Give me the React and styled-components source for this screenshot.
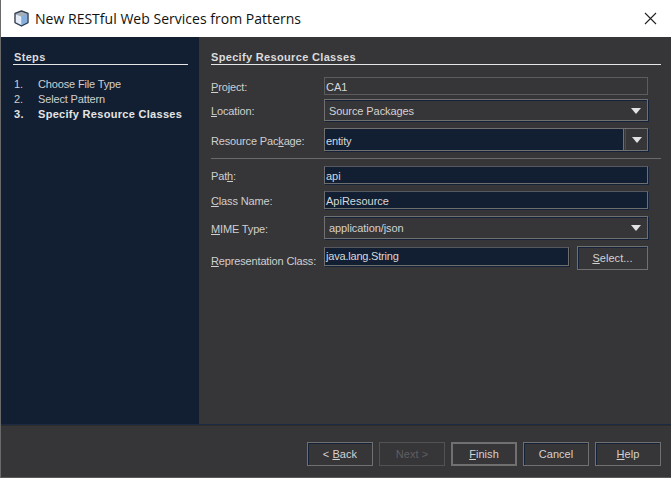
import React from 'react';
import styled, { createGlobalStyle } from 'styled-components';

const GlobalStyle = createGlobalStyle`
  html, body {
    margin: 0;
    padding: 0;
    background: #363538;
  }
`;

const Dialog = styled.div`
  width: 671px;
  height: 478px;
  box-sizing: border-box;
  display: flex;
  flex-direction: column;
  border-left: 1px solid #6a6a6a;
  border-bottom: 1px solid #5a5a5a;
  font-family: "Liberation Sans", Arial, sans-serif;
  font-size: 11px;
  color: #d6d6d6;
  background: #363538;
  overflow: hidden;
`;

const TitleBar = styled.div`
  height: 37px;
  flex: none;
  background: #fff;
  display: flex;
  align-items: center;
  padding-left: 12px;
  gap: 5px;
  color: #111;
  font-family: "Open Sans", "Noto Sans", sans-serif;
  font-size: 14px;
  letter-spacing: 0.02px;
`;

const TitleText = styled.span`
  flex: 1;
`;

const CloseIcon = styled.svg`
  width: 13px;
  height: 13px;
  margin-right: 14px;
`;

const Body = styled.div`
  flex: 1;
  display: flex;
  min-height: 0;
`;

const Sidebar = styled.div`
  width: 198px;
  flex: none;
  box-sizing: border-box;
  padding: 14px 11px 0 12px;
  background: #121f33;
`;

const SectionTitle = styled.div`
  font-weight: bold;
  color: #dcdcdc;
  letter-spacing: 0.33px;
  line-height: 13px;
  height: 13px;
  padding-left: 1px;
  border-bottom: 1px solid #e6e6e6;
`;

const MainTitle = styled(SectionTitle)`
  padding-left: 0;
`;

const StepList = styled.ol`
  list-style: none;
  margin: 12px 0 0 1px;
  padding: 0;
`;

const Step = styled.li`
  display: flex;
  height: 15px;
  line-height: 15px;
  font-weight: ${(p) => (p.$current ? 'bold' : 'normal')};
  color: ${(p) => (p.$current ? '#e4e4e4' : '#cfcfcf')};
  letter-spacing: ${(p) => (p.$current ? '0.3px' : '-0.15px')};
`;

const StepNum = styled.span`
  width: 24px;
  flex: none;
`;

const Main = styled.div`
  flex: 1;
  box-sizing: border-box;
  padding: 14px 10px 0 12px;
`;

const Form = styled.div`
  display: flex;
  flex-direction: column;
  margin-top: 12px;
  padding-right: 13px;
`;

const Row = styled.div`
  display: flex;
  align-items: center;
  height: ${(p) => p.$h}px;
  margin-bottom: ${(p) => p.$gap || 0}px;
`;

const Label = styled.label`
  width: 113px;
  flex: none;
  padding-top: 2px;
  color: #cfcfcf;
  letter-spacing: -0.15px;
  u {
    text-underline-offset: 1px;
  }
`;

const Field = styled.div`
  flex: 1;
  height: 100%;
  box-sizing: border-box;
  display: flex;
  align-items: center;
  padding: 2px 0 0 1px;
  color: #d8d8d8;
  letter-spacing: 0;
  background: ${(p) => (p.$readOnly ? 'transparent' : '#121f33')};
  border: 1px solid ${(p) => (p.$readOnly ? '#5c5c5c' : '#6e6e6e')};
  ${(p) => (p.$readOnly ? '' : 'border-top-color: #55585e; border-left-color: #6e6e6e; box-shadow: 1px 1px 0 #14233a;')}
`;

const Combo = styled.div`
  flex: 1;
  height: 100%;
  box-sizing: border-box;
  display: flex;
  align-items: center;
  justify-content: space-between;
  padding: ${(p) => p.$pad || 0}px 6px 0 4px;
  color: #d2d2d2;
  letter-spacing: -0.08px;
  border: 1px solid #707070;
  box-shadow: inset 0 1px 0 #14233a, 1px 1px 0 #14233a;
`;

const EditableCombo = styled.div`
  flex: 1;
  height: 100%;
  box-sizing: border-box;
  display: flex;
  border: 1px solid #707070;
  box-shadow: 1px 1px 0 #14233a;
`;

const ComboInput = styled.div`
  flex: 1;
  display: flex;
  align-items: center;
  padding: 2px 0 0 1px;
  color: #d8d8d8;
  letter-spacing: -0.15px;
  background: #121f33;
  border-right: 1px solid #707070;
`;

const ComboButton = styled.div`
  width: 21px;
  flex: none;
  display: flex;
  align-items: center;
  justify-content: center;
  margin-left: 1px;
  border-left: 1px solid #4c4c4c;
`;

const Arrow = styled.span`
  width: 0;
  height: 0;
  border-left: 5px solid transparent;
  border-right: 5px solid transparent;
  border-top: 6px solid #e2e2e2;
`;

const Divider = styled.div`
  height: 1px;
  background: #6a6a6a;
  margin: 7px -13px 7px 0;
`;

const ClassRow = styled.div`
  display: flex;
  align-items: flex-start;
`;

const ClassField = styled(Field)`
  flex: none;
  width: 245px;
  height: 19px;
  margin-top: 1px;
  padding: 0 0 2px 1px;
  letter-spacing: -0.2px;
`;

const ClassLabel = styled(Label)`
  line-height: 27px;
`;

const ActionButton = styled.button`
  box-sizing: border-box;
  width: 66px;
  height: 24px;
  padding: 0;
  margin: 0;
  background: transparent;
  font: inherit;
  letter-spacing: 0.05px;
  color: ${(p) => (p.disabled ? '#5f5f62' : '#d2d2d2')};
  border: ${(p) => (p.$default ? '2px' : '1px')} solid ${(p) => (p.disabled ? '#525255' : '#707070')};
  ${(p) => (p.$default || p.disabled ? '' : 'box-shadow: inset 1px 1px 0 #14233a;')}
  u {
    text-underline-offset: 1px;
  }
`;

const SelectButton = styled(ActionButton)`
  width: 71px;
  margin-left: 8px;
`;

const Footer = styled.div`
  height: 53px;
  flex: none;
  box-sizing: border-box;
  border-top: 1px solid #1b2b44;
  box-shadow: inset 0 1px 0 #2c2c2f;
  display: flex;
  justify-content: flex-end;
  align-items: flex-start;
  gap: 6px;
  padding: 17px 10px 0 0;
`;

function CubeIcon() {
  return (
    <svg width="17" height="17" viewBox="0 0 17 17">
      <path d="M8.5 1 15 3.4V12.6L8.5 16 2 12.6V3.4Z" fill="#7ea6d8" stroke="#333c4a" strokeWidth="1.4" strokeLinejoin="round" />
      <path d="M2.8 4.2 8.5 6.6V15L2.8 12.2Z" fill="#e4edf8" />
      <path d="M8.5 1.8 14.2 4.2 8.5 6.6 2.8 4.2Z" fill="#a9aeb6" />
      <path d="M8.5 6.6 14.2 4.2V12.2L8.5 15Z" fill="#86aede" />
    </svg>
  );
}

export default function App() {
  return (
    <>
      <GlobalStyle />
      <Dialog>
        <TitleBar>
          <CubeIcon />
          <TitleText>New RESTful Web Services from Patterns</TitleText>
          <CloseIcon viewBox="0 0 13 13">
            <path d="M1 1 12 12M12 1 1 12" stroke="#222" strokeWidth="1.1" fill="none" />
          </CloseIcon>
        </TitleBar>
        <Body>
          <Sidebar>
            <SectionTitle>Steps</SectionTitle>
            <StepList>
              <Step><StepNum>1.</StepNum>Choose File Type</Step>
              <Step><StepNum>2.</StepNum>Select Pattern</Step>
              <Step $current><StepNum>3.</StepNum>Specify Resource Classes</Step>
            </StepList>
          </Sidebar>
          <Main>
            <MainTitle>Specify Resource Classes</MainTitle>
            <Form>
              <Row $h={18} $gap={4}>
                <Label><u>P</u>roject:</Label>
                <Field $readOnly>CA1</Field>
              </Row>
              <Row $h={22} $gap={7}>
                <Label><u>L</u>ocation:</Label>
                <Combo $pad={2}>Source Packages<Arrow /></Combo>
              </Row>
              <Row $h={23}>
                <Label>Resource Pac<u>k</u>age:</Label>
                <EditableCombo>
                  <ComboInput>entity</ComboInput>
                  <ComboButton><Arrow /></ComboButton>
                </EditableCombo>
              </Row>
              <Divider />
              <Row $h={18} $gap={7}>
                <Label>Pat<u>h</u>:</Label>
                <Field>api</Field>
              </Row>
              <Row $h={18} $gap={7}>
                <Label><u>C</u>lass Name:</Label>
                <Field>ApiResource</Field>
              </Row>
              <Row $h={23} $gap={7}>
                <Label><u>M</u>IME Type:</Label>
                <Combo>application/json<Arrow /></Combo>
              </Row>
              <ClassRow>
                <ClassLabel><u>R</u>epresentation Class:</ClassLabel>
                <ClassField>java.lang.String</ClassField>
                <SelectButton><u>S</u>elect...</SelectButton>
              </ClassRow>
            </Form>
          </Main>
        </Body>
        <Footer>
          <ActionButton>&lt; <u>B</u>ack</ActionButton>
          <ActionButton disabled>Next &gt;</ActionButton>
          <ActionButton $default><u>F</u>inish</ActionButton>
          <ActionButton>Cancel</ActionButton>
          <ActionButton><u>H</u>elp</ActionButton>
        </Footer>
      </Dialog>
    </>
  );
}
